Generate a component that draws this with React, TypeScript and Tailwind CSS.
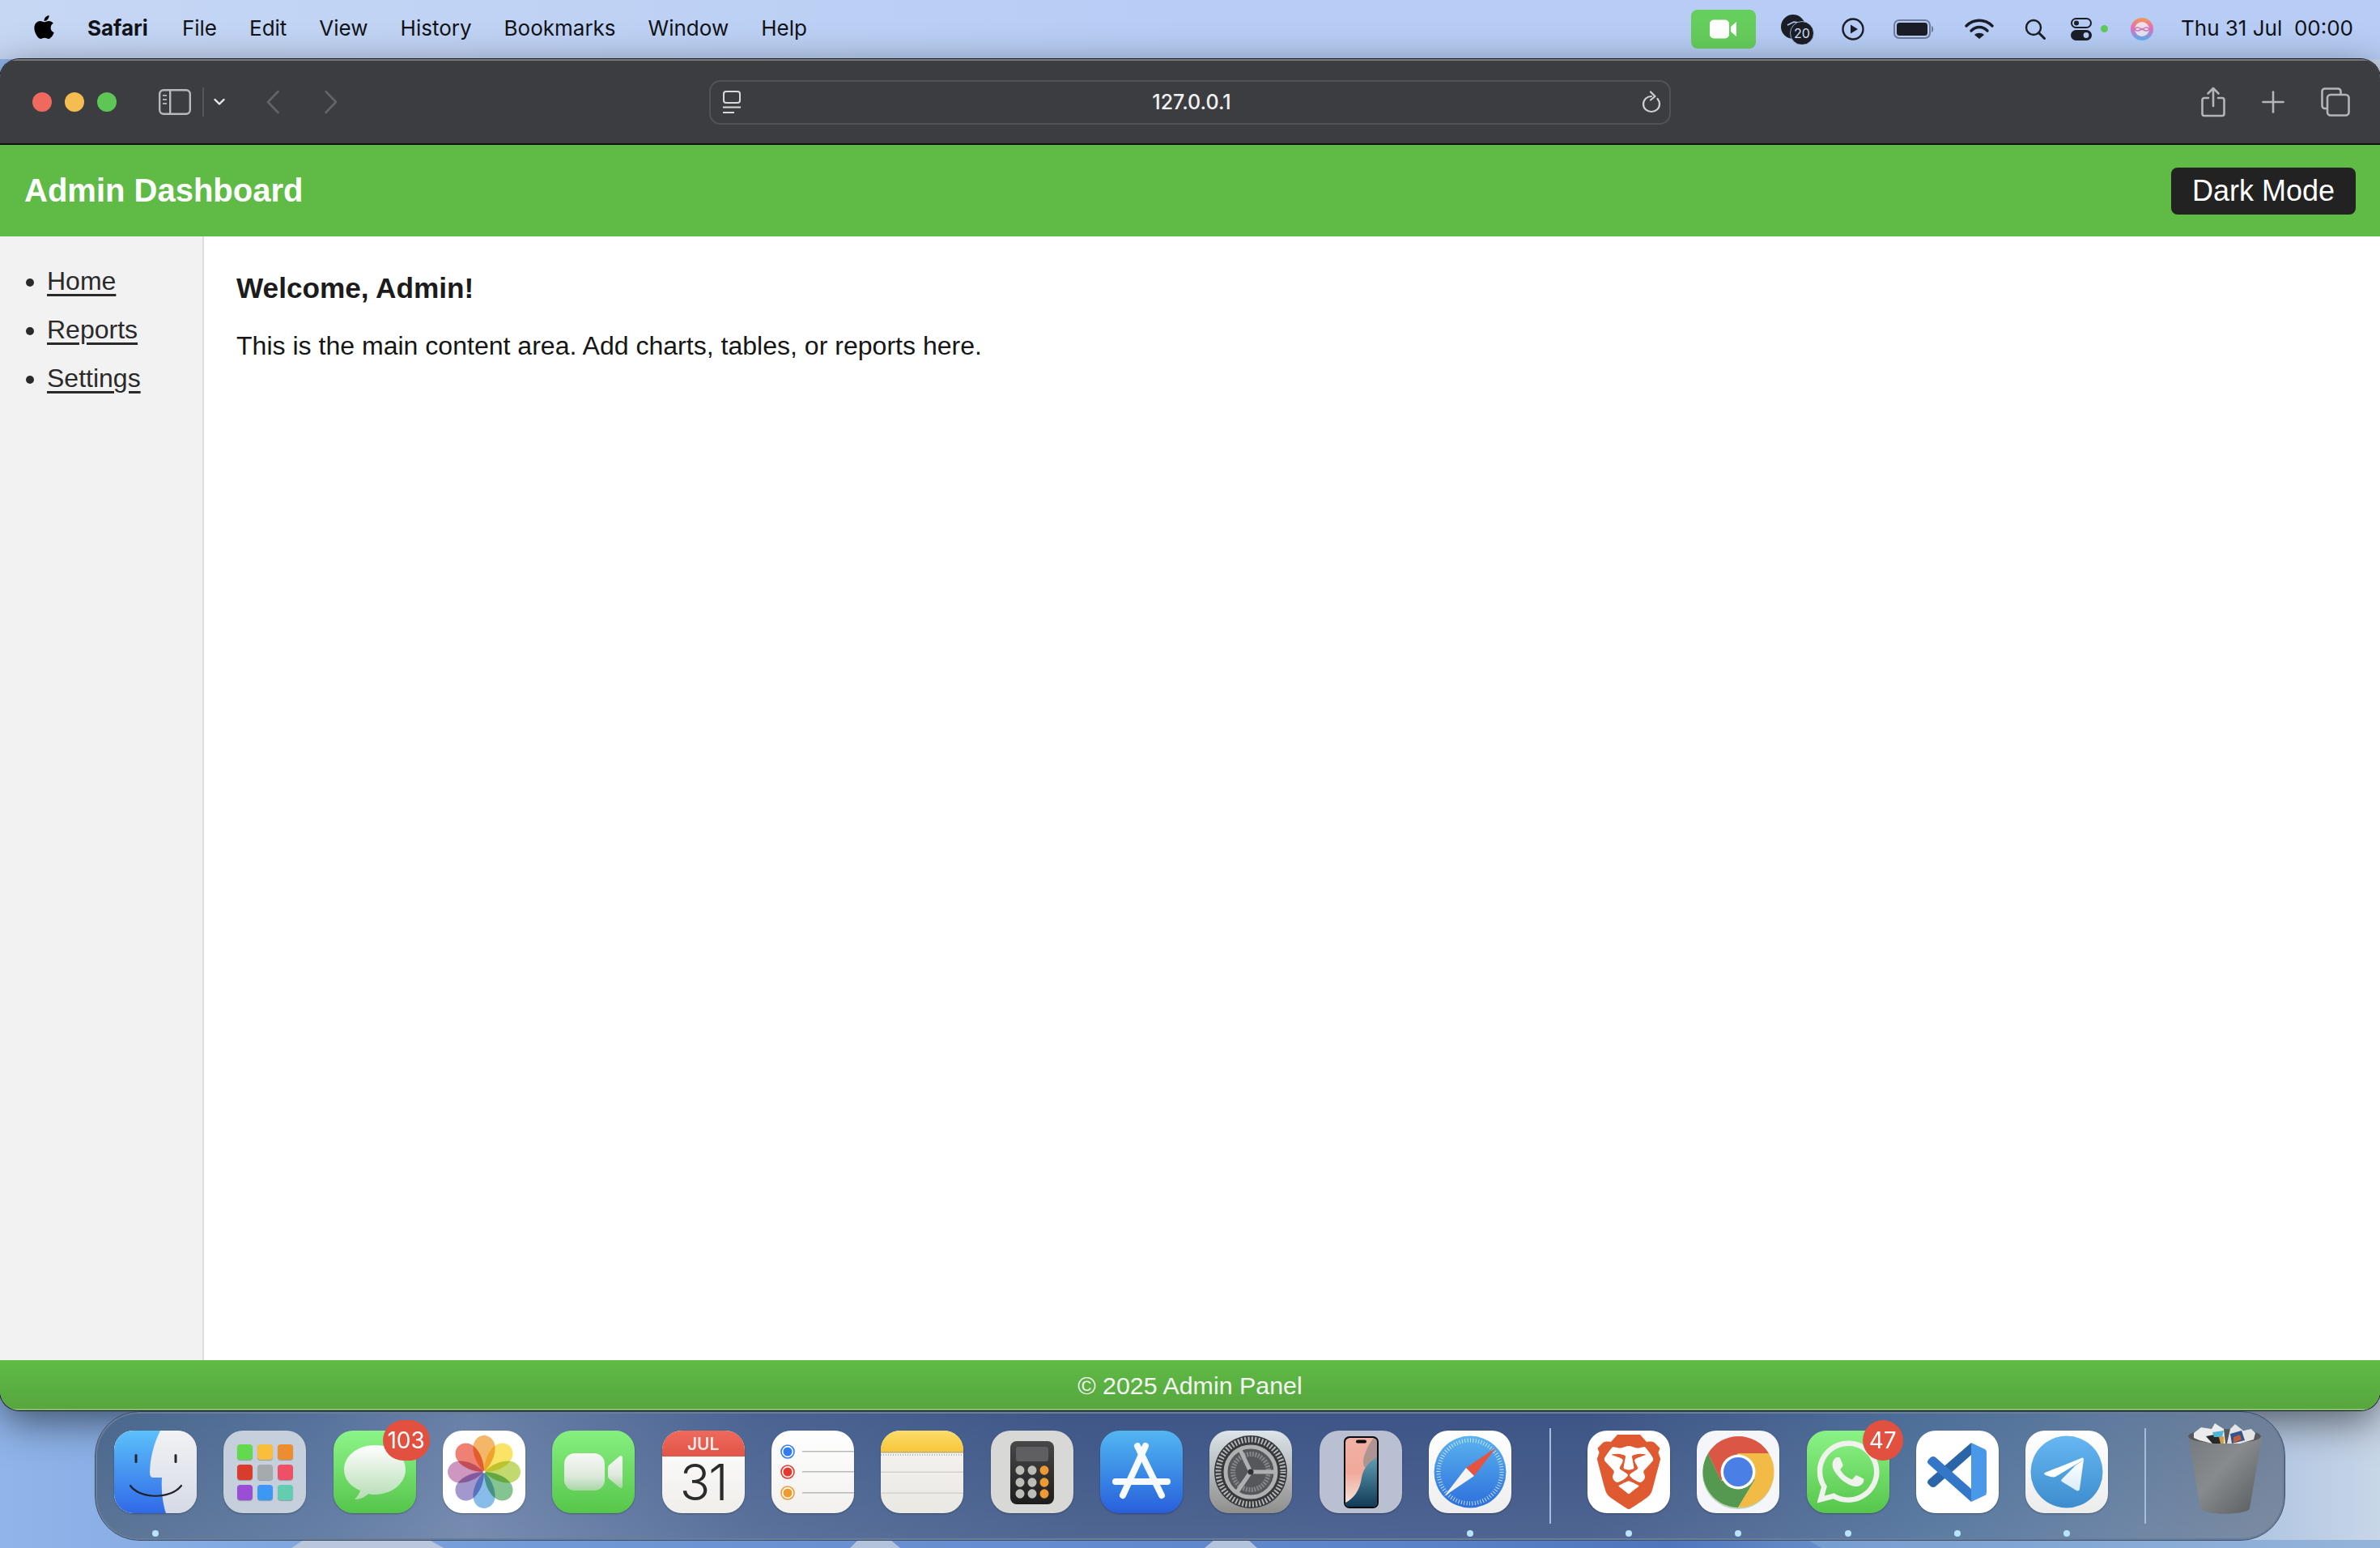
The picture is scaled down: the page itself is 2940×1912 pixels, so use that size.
import type { ReactNode } from 'react';
import { FaApple, FaWhatsapp } from 'react-icons/fa';
import { SiBrave } from 'react-icons/si';

const menus = ['File', 'Edit', 'View', 'History', 'Bookmarks', 'Window', 'Help'];

function Squircle({ className, children }: { className: string; children?: ReactNode }) {
  return (
    <div className={`relative w-[102px] h-[102px] rounded-[24px] overflow-hidden shadow-[0_1px_2px_rgba(0,0,0,0.3)] ${className}`}>
      {children}
    </div>
  );
}

function Art({ children }: { children: ReactNode }) {
  return (
    <svg width="102" height="102" viewBox="0 0 102 102" className="block">
      {children}
    </svg>
  );
}

function Finder() {
  return (
    <Squircle className="bg-[#e4e7ee]">
      <Art>
        <defs>
          <linearGradient id="finderBlue" x1="0" y1="0" x2="0" y2="1">
            <stop offset="0" stopColor="#5cc0fa" />
            <stop offset="1" stopColor="#3069e8" />
          </linearGradient>
          <linearGradient id="finderGrey" x1="0" y1="0" x2="0" y2="1">
            <stop offset="0" stopColor="#f1f2f4" />
            <stop offset="1" stopColor="#d5dae6" />
          </linearGradient>
        </defs>
        <rect width="102" height="102" fill="url(#finderGrey)" />
        <path d="M0 0H57C50 14 45 30 44 51C44 55 45 58 48 58H59C58 74 60 90 64 102H0Z" fill="url(#finderBlue)" />
        <rect x="25.5" y="29" width="3" height="11" rx="1.5" fill="#23262c" />
        <rect x="74.5" y="29" width="3" height="11" rx="1.5" fill="#23262c" />
        <path d="M20 68C32 85 70 85 83 68" fill="none" stroke="#20232a" strokeWidth="2.2" strokeLinecap="round" />
      </Art>
    </Squircle>
  );
}

function Launchpad() {
  const colors = ['#63d94f', '#f8be3c', '#ec8e30', '#d93c2a', '#a5abad', '#ef5067', '#9a4ed6', '#3d97f4', '#62cdb0'];
  return (
    <Squircle className="bg-[#c6cfdc] grid grid-cols-[19px_19px_19px] grid-rows-[19px_19px_19px] gap-[6px] p-[17px]">
      {colors.map((c) => (
        <div key={c} className="rounded-[4px] shadow-[0_1px_1px_rgba(0,0,0,0.25)]" style={{ backgroundColor: c }} />
      ))}
    </Squircle>
  );
}

function Messages() {
  return (
    <Squircle className="bg-gradient-to-b from-[#8cf588] to-[#55c54a]">
      <Art>
        <defs>
          <linearGradient id="msgBubble" x1="0" y1="0" x2="0" y2="1">
            <stop offset="0" stopColor="#ffffff" />
            <stop offset="1" stopColor="#b5dcb4" />
          </linearGradient>
        </defs>
        <path
          d="M51 18C30 18 13 31 13 48C13 60 21 69 33 74C32 78 29 82 26 85C33 85 39 82 43 78C46 79 48 79 51 79C72 79 89 65 89 48C89 31 72 18 51 18Z"
          fill="url(#msgBubble)"
        />
      </Art>
    </Squircle>
  );
}

function Photos() {
  const petals = ['#f09a2c', '#f8da2e', '#a9cb35', '#54ad6a', '#5aa4e2', '#7f70ba', '#bb6fa8', '#e8513f'];
  return (
    <Squircle className="bg-white">
      <Art>
        {petals.map((c, i) => (
          <path
            key={c}
            d="M51 51C41 41 37 29 37.5 20C38 11 45 6 51 6C57 6 64 11 64.5 20C65 29 61 41 51 51Z"
            fill={c}
            fillOpacity="0.72"
            transform={`rotate(${i * 45} 51 51)`}
            className="mix-blend-multiply"
          />
        ))}
        <circle cx="51" cy="51" r="1.6" fill="#fff" />
      </Art>
    </Squircle>
  );
}

function FaceTimeIcon() {
  return (
    <Squircle className="bg-gradient-to-b from-[#86f07f] to-[#56c64a]">
      <Art>
        <defs>
          <linearGradient id="ftBody" x1="0" y1="0" x2="0" y2="1">
            <stop offset="0" stopColor="#f6f8f5" />
            <stop offset="0.6" stopColor="#dfe9dd" />
            <stop offset="1" stopColor="#a8d6a4" />
          </linearGradient>
        </defs>
        <rect x="15" y="28" width="50" height="46" rx="13" fill="url(#ftBody)" />
        <path d="M69 46C69 44 70 43 71 42L83 32C85 30 87 31 87 34V68C87 71 85 72 83 70L71 60C70 59 69 58 69 56Z" fill="url(#ftBody)" />
      </Art>
    </Squircle>
  );
}

function CalendarIcon() {
  return (
    <Squircle className="bg-gradient-to-b from-white to-[#efeeea]">
      <div className="h-[32px] bg-gradient-to-b from-[#ef6a5c] to-[#e05548] flex items-center justify-center text-[#fbe9e6] text-[21px] font-semibold font-['Inter',sans-serif] pt-[1px]">
        JUL
      </div>
      <div className="mt-[2px] h-[60px] flex justify-center text-[#2b2b2b] text-[62px] leading-[60px] font-light font-['Inter',sans-serif] tracking-[-2px]">31</div>
    </Squircle>
  );
}

function Reminders() {
  const rows = [
    ['#2f7bf2', 26],
    ['#e5392e', 51],
    ['#ee9a2c', 77],
  ] as const;
  return (
    <Squircle className="bg-gradient-to-b from-white to-[#f2f1ee]">
      <Art>
        {rows.map(([c, y]) => (
          <g key={c}>
            <circle cx="20" cy={y} r="8" fill="#fff" stroke={c} strokeWidth="1.6" />
            <circle cx="20" cy={y} r="5.5" fill={c} />
            <rect x="38" y={y - 1} width="64" height="1.5" fill="#b9b9b9" />
          </g>
        ))}
      </Art>
    </Squircle>
  );
}

function Notes() {
  return (
    <Squircle className="bg-gradient-to-b from-[#f6f5f2] to-[#e9e8e3]">
      <Art>
        <defs>
          <linearGradient id="noteTop" x1="0" y1="0" x2="0" y2="1">
            <stop offset="0" stopColor="#fcdc6a" />
            <stop offset="1" stopColor="#f8c63b" />
          </linearGradient>
        </defs>
        <rect width="102" height="26" fill="url(#noteTop)" />
        <rect y="26" width="102" height="1.5" fill="#b9ab78" />
        <line x1="0" y1="30" x2="102" y2="30" stroke="#b8b8b8" strokeWidth="2" strokeDasharray="1 2" />
        <rect y="50.5" width="102" height="1.5" fill="#d2d1cd" />
        <rect y="76.5" width="102" height="1.5" fill="#d2d1cd" />
      </Art>
    </Squircle>
  );
}

function Calculator() {
  const cols = [36, 51, 66];
  const rows = [49, 64, 78];
  return (
    <Squircle className="bg-[#d8d8d6]">
      <Art>
        <defs>
          <linearGradient id="calcBody" x1="0" y1="0" x2="0" y2="1">
            <stop offset="0" stopColor="#484848" />
            <stop offset="1" stopColor="#1d1d1d" />
          </linearGradient>
        </defs>
        <rect x="24" y="13" width="54" height="78" rx="8" fill="url(#calcBody)" />
        <rect x="31" y="20" width="40" height="18" rx="3" fill="#5f5f61" />
        {rows.map((y) =>
          cols.map((x) => <ellipse key={`${x}-${y}`} cx={x} cy={y} rx="5.5" ry="5.8" fill={x === 66 ? '#ed9a34' : '#bdbdb8'} />),
        )}
      </Art>
    </Squircle>
  );
}

function AppStore() {
  return (
    <Squircle className="bg-gradient-to-b from-[#54b6f0] to-[#2a5edb]">
      <Art>
        <g fill="none" stroke="#f7fbff" strokeWidth="8" strokeLinecap="round">
          <path d="M56 19L28 80" />
          <path d="M46 19L76 80" />
          <path d="M19 63H83" />
        </g>
      </Art>
    </Squircle>
  );
}

function SystemSettings() {
  return (
    <Squircle className="bg-gradient-to-b from-[#dce5ea] to-[#8f8f8d]">
      <Art>
        <circle cx="51" cy="51" r="45" fill="#37393c" />
        <circle cx="51" cy="51" r="40" fill="none" stroke="#b4b6b8" strokeWidth="7" strokeDasharray="2 2.2" />
        <circle cx="51" cy="51" r="33" fill="#55575a" />
        <circle cx="51" cy="51" r="31" fill="none" stroke="#aeb0b2" strokeWidth="5" />
        <circle cx="51" cy="51" r="22" fill="none" stroke="#85878a" strokeWidth="6" strokeDasharray="2 1.5" />
        <g stroke="#aeb0b2" strokeWidth="5" strokeLinecap="round">
          <path d="M51 51L38 24" />
          <path d="M51 51L81 51" />
          <path d="M51 51L34 76" />
        </g>
        <circle cx="51" cy="51" r="3.5" fill="#2e3033" />
      </Art>
    </Squircle>
  );
}

function IphoneMirroring() {
  return (
    <Squircle className="bg-[#b9c0d1]">
      <Art>
        <defs>
          <linearGradient id="phoneScreen" x1="0" y1="0" x2="0" y2="1">
            <stop offset="0" stopColor="#f0b1a4" />
            <stop offset="0.5" stopColor="#f0a99b" />
            <stop offset="1" stopColor="#f7e9e2" />
          </linearGradient>
          <linearGradient id="phoneTeal" x1="0" y1="0" x2="0" y2="1">
            <stop offset="0" stopColor="#5f9fb4" />
            <stop offset="1" stopColor="#123a58" />
          </linearGradient>
        </defs>
        <rect x="30" y="7" width="43" height="89" rx="7" fill="#0b0b0e" />
        <rect x="32" y="9" width="39" height="85" rx="5.5" fill="url(#phoneScreen)" />
        <path d="M71 14V40C60 44 55 50 54 40C54 30 60 18 66 10C69 10 71 11 71 14Z" fill="#8f8a8c" opacity="0.7" />
        <path d="M71 33V88C71 92 69 94 66 94H37C34 94 32 92 32 89C42 84 50 74 52 58C54 46 62 38 71 33Z" fill="url(#phoneTeal)" />
        <rect x="45" y="11.5" width="13" height="4" rx="2" fill="#0b0b0e" />
      </Art>
    </Squircle>
  );
}

function SafariIcon() {
  return (
    <Squircle className="bg-gradient-to-b from-white to-[#eeeeee]">
      <Art>
        <defs>
          <linearGradient id="safariBlue" x1="0" y1="0" x2="0" y2="1">
            <stop offset="0" stopColor="#5ab3ee" />
            <stop offset="1" stopColor="#2d6fdc" />
          </linearGradient>
        </defs>
        <circle cx="51" cy="51" r="44.5" fill="url(#safariBlue)" />
        <circle cx="51" cy="51" r="39" fill="none" stroke="#e9f3fd" strokeWidth="5" strokeDasharray="0.8 2.6" />
        <path d="M83 21L56 56L46 46Z" fill="#e6533f" />
        <path d="M19 81L46 46L56 56Z" fill="#f4f4f4" />
      </Art>
    </Squircle>
  );
}

function BraveIcon() {
  return (
    <Squircle className="bg-white flex items-center justify-center">
      <SiBrave size={92} color="#df5a30" />
    </Squircle>
  );
}

function ChromeIcon() {
  return (
    <Squircle className="bg-[#f5f6f9]">
      <Art>
        <circle cx="51" cy="53" r="44" fill="#5b8f4f" opacity="0.35" />
        <path d="M14 28A44 44 0 0 0 51 95L72 60L30 62Z" fill="#54994f" />
        <path d="M89 28A44 44 0 0 1 51 95L72 60L51 28Z" fill="#f2bb45" />
        <path d="M14 28A44 44 0 0 1 89 28H51L30 62Z" fill="#da5645" />
        <circle cx="51" cy="51" r="21.5" fill="#fff" />
        <circle cx="51" cy="51" r="18" fill="#4a7fe6" />
      </Art>
    </Squircle>
  );
}

function WhatsAppIcon() {
  return (
    <Squircle className="bg-gradient-to-b from-[#8bf386] to-[#56c64a] flex items-center justify-center">
      <FaWhatsapp size={88} color="#f0f2ee" />
    </Squircle>
  );
}

function VsCodeIcon() {
  return (
    <Squircle className="bg-white">
      <Art>
        <path d="M68 15L15 61Q13 64 15 66L18 69Q21 71 24 69L68 30Z" fill="#2a65a8" />
        <path d="M15 36Q13 39 15 41L68 88V72L24 33Q21 31 18 33Z" fill="#3477c9" />
        <path d="M68 15L85 23Q87 24 87 27V76Q87 79 85 80L68 88Z" fill="#4a98e8" />
      </Art>
    </Squircle>
  );
}

function TelegramIcon() {
  return (
    <Squircle className="bg-gradient-to-b from-white to-[#ececec]">
      <Art>
        <defs>
          <linearGradient id="tgBlue" x1="0" y1="0" x2="0" y2="1">
            <stop offset="0" stopColor="#66b7f2" />
            <stop offset="1" stopColor="#3d8ccd" />
          </linearGradient>
          <linearGradient id="tgLow" x1="0" y1="0" x2="0" y2="1">
            <stop offset="0" stopColor="#ffffff" />
            <stop offset="1" stopColor="#d9edfb" />
          </linearGradient>
        </defs>
        <circle cx="51" cy="51" r="44.5" fill="url(#tgBlue)" />
        <path d="M24 52L69 34C71 33 72 34 72 36L37 57C35 58 33 57 31 57L25 55C23 54 23 53 24 52Z" fill="#fff" />
        <path d="M72 36L67 72C67 74 65 75 63 74L45 63C44 62 44 61 45 60L61 44C58 46 60 44 72 36Z" fill="url(#tgLow)" />
      </Art>
    </Squircle>
  );
}

function TrashIcon() {
  return (
    <svg width="91" height="118" viewBox="0 0 91 118" className="block">
      <defs>
        <linearGradient id="binBody" x1="0" y1="0" x2="1" y2="1">
          <stop offset="0" stopColor="#74797d" />
          <stop offset="0.45" stopColor="#878b8e" />
          <stop offset="1" stopColor="#585b5e" />
        </linearGradient>
      </defs>
      <path d="M0 17C0 12 90 12 91 17L76 106C74 115 17 115 15 106Z" fill="url(#binBody)" />
      <ellipse cx="45" cy="17" rx="45" ry="9" fill="#55585b" />
      <path d="M7 13L16 6L29 8L33 1L44 8L46 26L30 26L14 22L7 19Z" fill="#ececec" />
      <path d="M48 26L52 8L58 2L68 10L78 8L83 13L81 21L64 26Z" fill="#e4e4e4" />
      <path d="M22 17L38 14L42 26L30 26Z" fill="#26282c" />
      <path d="M30 12L44 10L42 18L32 18Z" fill="#4fb4d6" />
      <path d="M38 18L44 17L44 26L40 26Z" fill="#d8a03c" />
      <path d="M52 14L66 10L70 22L54 26Z" fill="#34548f" />
      <path d="M56 18L64 15L66 21L56 25Z" fill="#c65a32" />
    </svg>
  );
}

const firstGroup = [
  { key: 'finder', icon: <Finder />, dot: true },
  { key: 'launchpad', icon: <Launchpad /> },
  { key: 'messages', icon: <Messages />, badge: '103' },
  { key: 'photos', icon: <Photos /> },
  { key: 'facetime', icon: <FaceTimeIcon /> },
  { key: 'calendar', icon: <CalendarIcon /> },
  { key: 'reminders', icon: <Reminders /> },
  { key: 'notes', icon: <Notes /> },
  { key: 'calculator', icon: <Calculator /> },
  { key: 'appstore', icon: <AppStore /> },
  { key: 'settings', icon: <SystemSettings /> },
  { key: 'mirroring', icon: <IphoneMirroring /> },
  { key: 'safari', icon: <SafariIcon />, dot: true },
];

const secondGroup = [
  { key: 'brave', icon: <BraveIcon />, dot: true },
  { key: 'chrome', icon: <ChromeIcon />, dot: true },
  { key: 'whatsapp', icon: <WhatsAppIcon />, dot: true, badge: '47' },
  { key: 'vscode', icon: <VsCodeIcon />, dot: true },
  { key: 'telegram', icon: <TelegramIcon />, dot: true },
];

type DockEntry = { key: string; icon: ReactNode; dot?: boolean; badge?: string };

function DockItem({ item }: { item: DockEntry }) {
  return (
    <div className="relative w-[102px] flex flex-col items-center">
      {item.icon}
      {item.badge && (
        <div
          className={`absolute top-[-13px] h-[50px] rounded-full bg-[#e25140] text-white text-[28px] font-['Inter',sans-serif] flex items-center justify-center ${
            item.badge.length > 2 ? 'left-[61px] w-[58px]' : 'left-[69px] w-[50px]'
          }`}
        >
          {item.badge}
        </div>
      )}
      {item.dot && <div className="mt-[21px] w-[8px] h-[8px] rounded-full bg-[#b9e4ff]" />}
    </div>
  );
}

function MenuBarRight() {
  return (
    <div className="flex items-center pr-[33px] text-[#111318]">
      <div className="w-[80px] h-[48px] rounded-[8px] bg-[#66ce5c] flex items-center justify-center">
        <svg width="34" height="24" viewBox="0 0 34 24" fill="#fff">
          <rect width="24" height="23" y="0.5" rx="5" />
          <path d="M26 9L33 3V21L26 15Z" />
        </svg>
      </div>
      <svg width="42" height="38" viewBox="0 0 42 38" className="ml-[31px]">
        <circle cx="15" cy="16" r="15" fill="#1b1e26" />
        <path d="M8 14L16 10L28 12" fill="none" stroke="#b7cdf5" strokeWidth="1.5" />
        <circle cx="26" cy="24" r="14.5" fill="#1b1e26" stroke="#b7cdf5" strokeWidth="0.8" />
        <text x="26" y="30" textAnchor="middle" fontSize="16" fill="#d8e2f5" fontFamily="Inter, sans-serif">20</text>
      </svg>
      <svg width="28" height="28" viewBox="0 0 28 28" className="ml-[33px]">
        <circle cx="14" cy="14" r="12.5" fill="none" stroke="#1b1e26" strokeWidth="2.4" />
        <path d="M11 8.5L20 14L11 19.5Z" fill="#1b1e26" />
      </svg>
      <svg width="52" height="24" viewBox="0 0 52 24" className="ml-[36px]">
        <rect x="1" y="1" width="44" height="22" rx="6" fill="none" stroke="#6f7c9c" strokeWidth="2" />
        <rect x="4" y="4" width="38" height="16" rx="3.5" fill="#1b1e26" />
        <path d="M47 8C50 9 50 15 47 16Z" fill="#6f7c9c" />
      </svg>
      <svg width="36" height="26" viewBox="0 0 36 26" className="ml-[36px]">
        <g fill="none" stroke="#1b1e26" strokeWidth="3.4" strokeLinecap="round">
          <path d="M2 9C11 0 25 0 34 9" />
          <path d="M8 15C14 9 22 9 28 15" />
        </g>
        <path d="M18 25L12 20C15 17 21 17 24 20Z" fill="#1b1e26" />
      </svg>
      <svg width="26" height="26" viewBox="0 0 26 26" className="ml-[38px]">
        <circle cx="11" cy="11" r="9" fill="none" stroke="#1b1e26" strokeWidth="2.4" />
        <path d="M17.5 17.5L24.5 24.5" stroke="#1b1e26" strokeWidth="3" strokeLinecap="round" />
      </svg>
      <svg width="26" height="28" viewBox="0 0 26 28" className="ml-[31px]">
        <rect x="1" y="1" width="24" height="11" rx="5.5" fill="none" stroke="#1b1e26" strokeWidth="2" />
        <circle cx="7" cy="6.5" r="3" fill="#1b1e26" />
        <rect y="15" width="26" height="13" rx="6.5" fill="#1b1e26" />
        <circle cx="19" cy="21.5" r="3.4" fill="#b7cdf5" />
      </svg>
      <div className="ml-[11px] w-[9px] h-[9px] rounded-full bg-[#5fcb5a]" />
      <svg width="30" height="30" viewBox="0 0 30 30" className="ml-[27px]">
        <defs>
          <linearGradient id="siriRing" x1="0" y1="0" x2="0" y2="1">
            <stop offset="0" stopColor="#f29a4c" />
            <stop offset="0.45" stopColor="#e86cc0" />
            <stop offset="1" stopColor="#58b4f0" />
          </linearGradient>
        </defs>
        <circle cx="15" cy="15" r="14" fill="url(#siriRing)" />
        <circle cx="15" cy="15" r="9" fill="#eef1f8" opacity="0.85" />
        <path d="M6 15C10 8 20 22 24 15C20 8 10 22 6 15Z" fill="none" stroke="#c77fb0" strokeWidth="1.6" />
      </svg>
      <div className="ml-[33px] mb-[2px] text-[26px] whitespace-pre font-['Inter',sans-serif]">Thu 31 Jul  00:00</div>
    </div>
  );
}

function Toolbar() {
  return (
    <div className="relative h-[106px] shrink-0 bg-[#3c3d41] border-t-2 border-t-[#7a7b7e] border-b-2 border-b-[#111] flex items-center pl-[40px]">
      <div className="w-[24px] h-[24px] rounded-full bg-[#f0695f]" />
      <div className="ml-[16px] w-[24px] h-[24px] rounded-full bg-[#f5bd4f]" />
      <div className="ml-[16px] w-[24px] h-[24px] rounded-full bg-[#5ec654]" />
      <svg width="40" height="32" viewBox="0 0 40 32" className="ml-[52px]">
        <rect x="1.2" y="1.2" width="37.6" height="29.6" rx="5" fill="none" stroke="#b8b9bc" strokeWidth="2.4" />
        <rect x="13" y="2" width="2.4" height="28" fill="#b8b9bc" />
        <rect x="5" y="7" width="5" height="1.8" fill="#b8b9bc" />
        <rect x="5" y="12" width="5" height="1.8" fill="#b8b9bc" />
        <rect x="5" y="17" width="5" height="1.8" fill="#b8b9bc" />
      </svg>
      <div className="ml-[14px] w-[2px] h-[36px] bg-[#55565a]" />
      <svg width="14" height="10" viewBox="0 0 14 10" className="ml-[12px]">
        <path d="M1.5 2L7 7.5L12.5 2" fill="none" stroke="#e9e9ea" strokeWidth="2.4" strokeLinecap="round" strokeLinejoin="round" />
      </svg>
      <svg width="18" height="30" viewBox="0 0 18 30" className="ml-[50px]">
        <path d="M15.5 2L3 15L15.5 28" fill="none" stroke="#636468" strokeWidth="2.6" strokeLinecap="round" strokeLinejoin="round" />
      </svg>
      <svg width="18" height="30" viewBox="0 0 18 30" className="ml-[54px]">
        <path d="M2.5 2L15 15L2.5 28" fill="none" stroke="#636468" strokeWidth="2.6" strokeLinecap="round" strokeLinejoin="round" />
      </svg>
      <div className="ml-[458px] w-[1188px] h-[55px] rounded-[14px] border-2 border-[#525357] flex items-center pl-[14px] pr-[10px]">
        <svg width="24" height="30" viewBox="0 0 24 30" fill="none" stroke="#d9d9db" strokeWidth="2">
          <rect x="2" y="2" width="20" height="14" rx="3" />
          <path d="M1 21.5H23" />
          <path d="M1 28H15" />
        </svg>
        <div className="flex-1 text-center text-[25px] font-medium text-[#f2f2f3] font-['Inter',sans-serif] pt-[2px]">127.0.0.1</div>
        <svg width="24" height="28" viewBox="0 0 24 28" fill="none" stroke="#d0d0d2" strokeWidth="2.2" strokeLinecap="round" strokeLinejoin="round">
          <path d="M12 7C6.5 7 2 11.2 2 16.5C2 22 6.5 26 12 26C17.5 26 22 22 22 16.5C22 14 21 11.8 19.5 10" />
          <path d="M11 1.5L16.5 7L11 11.5" />
        </svg>
      </div>
      <svg width="30" height="38" viewBox="0 0 30 38" fill="none" stroke="#b4b5b8" strokeWidth="2.6" strokeLinecap="round" strokeLinejoin="round" className="ml-[655px]">
        <path d="M9 14H4C2.5 14 1.5 15 1.5 16.5V33.5C1.5 35 2.5 36 4 36H26C27.5 36 28.5 35 28.5 33.5V16.5C28.5 15 27.5 14 26 14H21" />
        <path d="M15 24V2.5" />
        <path d="M8.5 8.5L15 2L21.5 8.5" />
      </svg>
      <svg width="28" height="28" viewBox="0 0 28 28" fill="none" stroke="#b4b5b8" strokeWidth="2.6" strokeLinecap="round" className="ml-[45px]">
        <path d="M14 1.5V26.5" />
        <path d="M1.5 14H26.5" />
      </svg>
      <svg width="36" height="36" viewBox="0 0 36 36" fill="none" stroke="#b4b5b8" strokeWidth="2.6" className="ml-[45px]">
        <path d="M7 26H5C3 26 1.5 24.5 1.5 22.5V5C1.5 3 3 1.5 5 1.5H21C23 1.5 24.5 3 24.5 5V9" />
        <rect x="8" y="9" width="26.5" height="25.5" rx="4" />
      </svg>
    </div>
  );
}

export default function App() {
  return (
    <div className="relative w-[2940px] h-[1912px] overflow-hidden flex flex-col bg-[linear-gradient(90deg,#90b5ea_0%,#6f97d6_25%,#5a82c8_60%,#4f76bd_70%,#86a8d6_85%,#c8d6e8_100%)]">
      {/* wallpaper streaks under the dock */}
      <svg width="2940" height="10" viewBox="0 0 2940 10" className="absolute left-0 bottom-0">
        <path d="M375 0H530L548 10H360Z" fill="#b9c6dc" />
        <path d="M1060 0H1100L1112 10H1050Z" fill="#b4c3dc" />
        <path d="M1500 0H1542L1553 10H1488Z" fill="#b4c3dc" />
        <path d="M2233 0H2940V10H2250Z" fill="#7fa5d4" opacity="0.7" />
      </svg>

      {/* Menu bar */}
      <div className="h-[73px] shrink-0 flex items-center justify-between pb-[2px] bg-[linear-gradient(90deg,#c6d7f4_0%,#b7cdf5_50%,#b7cdf5_100%)] text-[#111318] text-[26px] font-['Inter',sans-serif]">
        <div className="flex items-center mb-[2px]">
          <FaApple size={33} className="ml-[38px] mb-[3px] text-black" />
          <div className="ml-[37px] mr-[2px] font-bold">Safari</div>
          {menus.map((m) => (
            <div key={m} className="ml-[40px]">
              {m}
            </div>
          ))}
        </div>
        <MenuBarRight />
      </div>

      {/* Browser window */}
      <div className="h-[1669px] shrink-0 flex flex-col rounded-[24px] overflow-hidden shadow-[0_0_0_1px_#17181b,0_14px_50px_rgba(0,0,0,0.55)] z-10 font-['Liberation_Sans',Arial,sans-serif]">
        <Toolbar />
        <div className="h-[113px] shrink-0 bg-[#5fbb46] flex items-center justify-between px-[30px]">
          <div className="text-white font-bold text-[40px] pb-[2px]">Admin Dashboard</div>
          <button className="w-[228px] h-[58px] rounded-[8px] bg-[#222222] text-white text-[36px]">Dark Mode</button>
        </div>
        <div className="flex-1 flex bg-white min-h-0">
          <div className="w-[252px] shrink-0 bg-[#f2f2f2] border-r-2 border-[#dcdcdc] pt-[25px] pl-[58px] text-[32px] text-[#2a2a2a]">
            <ul className="list-disc">
              <li className="h-[60px] leading-[60px] underline underline-offset-[5px]">Home</li>
              <li className="h-[60px] leading-[60px] underline underline-offset-[5px]">Reports</li>
              <li className="h-[60px] leading-[60px] underline underline-offset-[5px]">Settings</li>
            </ul>
          </div>
          <div className="flex-1 pl-[40px] pt-[44px]">
            <div className="font-bold text-[35.2px] leading-[40px] text-[#1c1c1c]">Welcome, Admin!</div>
            <div className="mt-[31px] text-[32.06px] leading-[40px] text-[#161616]">This is the main content area. Add charts, tables, or reports here.</div>
          </div>
        </div>
        <div className="h-[62px] shrink-0 bg-gradient-to-b from-[#5fbb46] to-[#57a63e] border-b-2 border-b-[#84bb72] flex items-center justify-center text-[#f4f7f2] text-[30.4px] pt-[3px]">
          © 2025 Admin Panel
        </div>
      </div>

      {/* Dock */}
      <div className="relative z-20 mt-[2px] ml-[118px] w-[2704px] h-[158px] shrink-0 flex items-start pl-[21px] pt-[21px] rounded-[54px] border-2 border-[#6a7e99] outline outline-1 outline-[#3d4d68] bg-[linear-gradient(180deg,rgba(255,255,255,0),rgba(255,255,255,0.09)),linear-gradient(90deg,#4a678c_0%,#56729c_10%,#6a81a8_17%,#4b6492_30%,#3e5787_45%,#3d5587_60%,#3d5586_68%,#47628f_76%,#4d7099_84%,#5f7a9e_92%,#6f8098_100%)]">
        <div className="flex gap-[33.33px]">
          {firstGroup.map((item) => (
            <DockItem key={item.key} item={item} />
          ))}
        </div>
        <div className="ml-[47px] mt-[-3px] w-[2px] h-[118px] bg-[#a6bbe0]" />
        <div className="ml-[45px] flex gap-[33.33px]">
          {secondGroup.map((item) => (
            <DockItem key={item.key} item={item} />
          ))}
        </div>
        <div className="ml-[45px] mt-[-3px] w-[2px] h-[118px] bg-[#a6bbe0]" />
        <div className="ml-[52px] mt-[-10px]">
          <TrashIcon />
        </div>
      </div>
    </div>
  );
}
